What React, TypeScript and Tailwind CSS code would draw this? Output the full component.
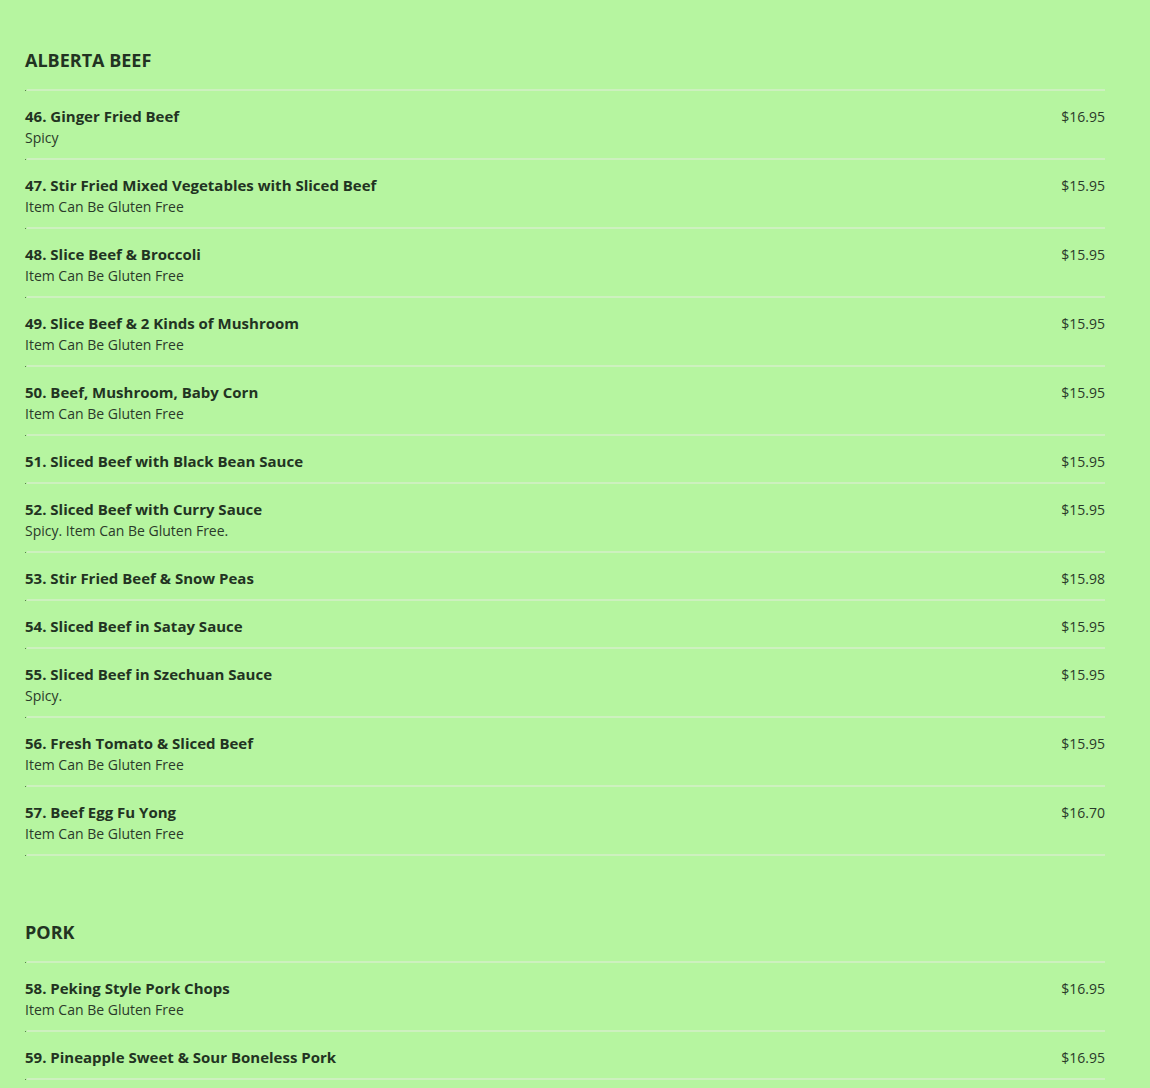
import React from "react";

type Item = { name: string; desc?: string; price: string };

const sections: { title: string; items: Item[] }[] = [
  {
    title: "ALBERTA BEEF",
    items: [
      { name: "46. Ginger Fried Beef", desc: "Spicy", price: "$16.95" },
      { name: "47. Stir Fried Mixed Vegetables with Sliced Beef", desc: "Item Can Be Gluten Free", price: "$15.95" },
      { name: "48. Slice Beef & Broccoli", desc: "Item Can Be Gluten Free", price: "$15.95" },
      { name: "49. Slice Beef & 2 Kinds of Mushroom", desc: "Item Can Be Gluten Free", price: "$15.95" },
      { name: "50. Beef, Mushroom, Baby Corn", desc: "Item Can Be Gluten Free", price: "$15.95" },
      { name: "51. Sliced Beef with Black Bean Sauce", price: "$15.95" },
      { name: "52. Sliced Beef with Curry Sauce", desc: "Spicy. Item Can Be Gluten Free.", price: "$15.95" },
      { name: "53. Stir Fried Beef & Snow Peas", price: "$15.98" },
      { name: "54. Sliced Beef in Satay Sauce", price: "$15.95" },
      { name: "55. Sliced Beef in Szechuan Sauce", desc: "Spicy.", price: "$15.95" },
      { name: "56. Fresh Tomato & Sliced Beef", desc: "Item Can Be Gluten Free", price: "$15.95" },
      { name: "57. Beef Egg Fu Yong", desc: "Item Can Be Gluten Free", price: "$16.70" },
    ],
  },
  {
    title: "PORK",
    items: [
      { name: "58. Peking Style Pork Chops", desc: "Item Can Be Gluten Free", price: "$16.95" },
      { name: "59. Pineapple Sweet & Sour Boneless Pork", price: "$16.95" },
    ],
  },
];

function Divider() {
  return (
    <div className="flex h-[2px] w-full">
      <div className="w-px h-px mt-px bg-[#5a7a50]" />
      <div className="w-px" />
      <div className="flex-1 bg-[#cdf0bf]" />
    </div>
  );
}

export default function App() {
  return (
    <div
      className="min-h-[1088px] bg-[#b6f5a0] text-[#263626] pl-[25px] pr-[45px]"
      style={{ fontFamily: '"Open Sans", "Noto Sans", sans-serif' }}
    >
      {sections.map((s) => (
        <section key={s.title} className="pt-[47px] pb-[16px]">
          <h2 className="text-[18px] leading-[26px] font-bold text-[#223322] mb-[16px]">{s.title}</h2>
          <Divider />
          {s.items.map((it) => (
            <div key={it.name}>
              <div className={it.desc ? "flex justify-between pt-[15px] pb-[10px]" : "flex justify-between pt-[15px] pb-[11px]"}>
                <div>
                  <div className="text-[15px] leading-[20px] font-bold text-[#223322]">{it.name}</div>
                  {it.desc && <div className="text-[14px] leading-[21px] mt-px text-[#2a3a2a]">{it.desc}</div>}
                </div>
                <div className="text-[14px] h-[20px] pt-[2px] leading-[18px] text-[#2a3a2a]">{it.price}</div>
              </div>
              <Divider />
            </div>
          ))}
        </section>
      ))}
    </div>
  );
}
